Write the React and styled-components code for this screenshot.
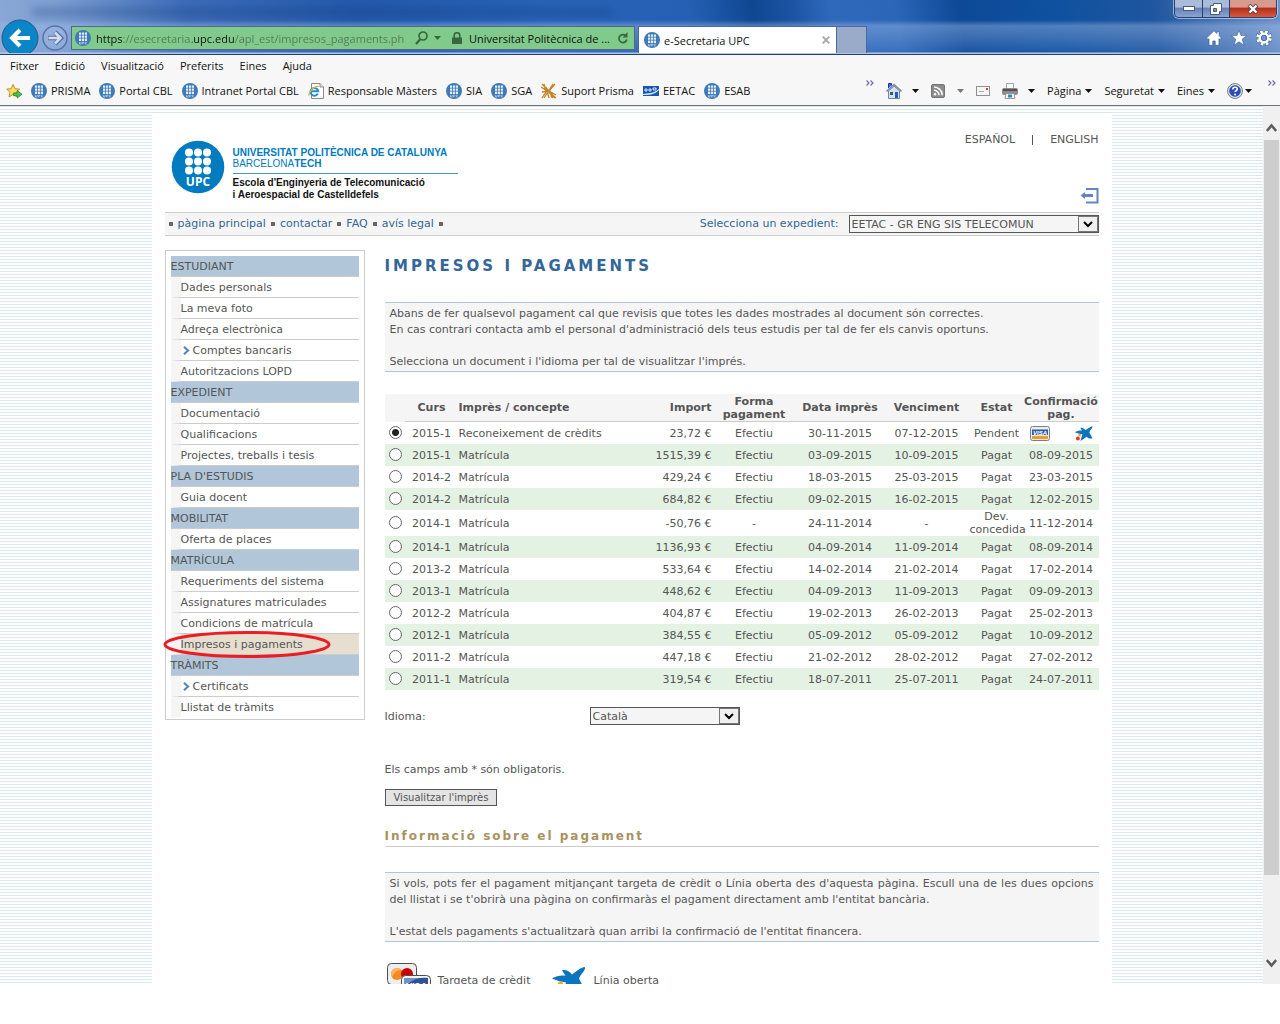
import React, { useState } from "react";
import styled, { createGlobalStyle } from "styled-components";

const favorites = [
  { icon: "upc", label: "PRISMA" },
  { icon: "upc", label: "Portal CBL" },
  { icon: "upc", label: "Intranet Portal CBL" },
  { icon: "ie", label: "Responsable Màsters" },
  { icon: "upc", label: "SIA" },
  { icon: "upc", label: "SGA" },
  { icon: "prisma", label: "Suport Prisma" },
  { icon: "eetac", label: "EETAC" },
  { icon: "upc", label: "ESAB" },
];

const menu = [
  {
    title: "ESTUDIANT",
    items: [
      { label: "Dades personals" },
      { label: "La meva foto" },
      { label: "Adreça electrònica" },
      { label: "Comptes bancaris", arrow: true },
      { label: "Autoritzacions LOPD" },
    ],
  },
  {
    title: "EXPEDIENT",
    items: [
      { label: "Documentació" },
      { label: "Qualificacions" },
      { label: "Projectes, treballs i tesis" },
    ],
  },
  { title: "PLA D'ESTUDIS", items: [{ label: "Guia docent" }] },
  { title: "MOBILITAT", items: [{ label: "Oferta de places" }] },
  {
    title: "MATRÍCULA",
    items: [
      { label: "Requeriments del sistema" },
      { label: "Assignatures matriculades" },
      { label: "Condicions de matrícula" },
      { label: "Impresos i pagaments", active: true },
    ],
  },
  {
    title: "TRÀMITS",
    items: [
      { label: "Certificats", arrow: true },
      { label: "Llistat de tràmits" },
    ],
  },
];

const payments = [
  ["2015-1", "Reconeixement de crèdits", "23,72 €", "Efectiu", "30-11-2015", "07-12-2015", "Pendent", null],
  ["2015-1", "Matrícula", "1515,39 €", "Efectiu", "03-09-2015", "10-09-2015", "Pagat", "08-09-2015"],
  ["2014-2", "Matrícula", "429,24 €", "Efectiu", "18-03-2015", "25-03-2015", "Pagat", "23-03-2015"],
  ["2014-2", "Matrícula", "684,82 €", "Efectiu", "09-02-2015", "16-02-2015", "Pagat", "12-02-2015"],
  ["2014-1", "Matrícula", "-50,76 €", "-", "24-11-2014", "-", "Dev. concedida", "11-12-2014"],
  ["2014-1", "Matrícula", "1136,93 €", "Efectiu", "04-09-2014", "11-09-2014", "Pagat", "08-09-2014"],
  ["2013-2", "Matrícula", "533,64 €", "Efectiu", "14-02-2014", "21-02-2014", "Pagat", "17-02-2014"],
  ["2013-1", "Matrícula", "448,62 €", "Efectiu", "04-09-2013", "11-09-2013", "Pagat", "09-09-2013"],
  ["2012-2", "Matrícula", "404,87 €", "Efectiu", "19-02-2013", "26-02-2013", "Pagat", "25-02-2013"],
  ["2012-1", "Matrícula", "384,55 €", "Efectiu", "05-09-2012", "05-09-2012", "Pagat", "10-09-2012"],
  ["2011-2", "Matrícula", "447,18 €", "Efectiu", "21-02-2012", "28-02-2012", "Pagat", "27-02-2012"],
  ["2011-1", "Matrícula", "319,54 €", "Efectiu", "18-07-2011", "25-07-2011", "Pagat", "24-07-2011"],
];

/* icons */

const UpcIcon = () => (
  <svg width="16" height="16" viewBox="0 0 16 16" aria-hidden="true">
    <circle cx="8" cy="8" r="8" fill="#3f7ab8" />
    <path d="M4 2.5h8v8.5H4z" fill="#e3edf6" />
    <path d="M6.500 2v9.500M9.500 2v9.500M4 5.200h8M4 8.200h8" stroke="#3f7ab8" strokeWidth="0.8" />
    <path d="M4.500 12v2h1.500v-2M7.300 14.200v-2h1.500v1h-1.500M11.800 12.200h-1.500v1.800h1.500" stroke="#c5d9ea" strokeWidth="0.7" fill="none" />
  </svg>
);

const IeIcon = () => (
  <svg width="16" height="16" viewBox="0 0 16 16" aria-hidden="true">
    <path d="M3.500 0.500h8.500l3.500 3.500v11.500h-12z" fill="#fff" stroke="#8b8b8b" />
    <path d="M12 0.500v3.500h3.500" fill="#e8e8e8" stroke="#8b8b8b" />
    <path d="M9.800 10.600A3.900 3.900 0 1 1 10.200 8.300H3" fill="none" stroke="#1e8fe0" strokeWidth="2" />
    <path d="M1 12.500C0 9 7 2.500 10.800 3.300" fill="none" stroke="#f0b323" strokeWidth="1.200" />
  </svg>
);

const PrismaIcon = () => (
  <svg width="16" height="16" viewBox="0 0 16 16" aria-hidden="true">
    <path d="M1 1l6 6 7 8M0 4l8 5 4 6M3 1l2 8-4 6M14 1L8 8l7 4M5 4l3 11M1 9l6-1 8 7M12 1l-9 14M9 9l2 6" stroke="#c08529" strokeWidth="1.300" fill="none" />
  </svg>
);

const EetacIcon = () => (
  <svg width="16" height="16" viewBox="0 0 16 16" aria-hidden="true">
    <rect y="3" width="16" height="10" fill="#1457b8" />
    <path d="M0 11c5-1 10 0 16-5v1C11 12 6 12 0 12z" fill="#fff" opacity="0.850" />
    <path d="M2 6h2v2H2zM6 6h2v2H6zM10 5h3v2h-3z" fill="none" stroke="#fff" strokeWidth="0.800" />
  </svg>
);

const AddFavoriteIcon = () => (
  <svg width="16" height="16" viewBox="0 0 17 16" aria-hidden="true">
    <path d="M7.500 1l2 4.500 5 .5-3.700 3.300 1 5-4.300-2.600-4.300 2.600 1-5L.8 6l4.700-.5z" fill="#fbdc62" stroke="#c58a17" />
    <path d="M8 10h4V7.500l5 4-5 4V13H8z" fill="#4fc04a" stroke="#1f8a2c" strokeWidth="0.800" />
  </svg>
);

const favoriteIcons = { upc: UpcIcon, ie: IeIcon, prisma: PrismaIcon, eetac: EetacIcon };

const Caret = ({ color = "#111" }) => (
  <svg width="7" height="4" viewBox="0 0 7 4" aria-hidden="true">
    <path d="M0 0h7L3.500 4z" fill={color} />
  </svg>
);

const Chevrons = () => (
  <svg width="8" height="6" viewBox="0 0 8 6" aria-hidden="true">
    <path d="M.5.500L3 3 .5 5.500M4.500.500L7 3 4.500 5.500" fill="none" stroke="#6a6ab0" strokeWidth="1.200" />
  </svg>
);

const HouseIcon = () => (
  <svg width="16" height="16" viewBox="0 0 16 16" aria-hidden="true">
    <path d="M2.500 8v7.500h11V8L8 3z" fill="#d5e0ef" stroke="#72869f" />
    <path d="M2.500 5V.5h3v2" fill="#3b5be0" stroke="#2638b0" />
    <path d="M.5 8.500L8 1.500l7.500 7" fill="none" stroke="#788caa" strokeWidth="1.600" />
    <path d="M9 9h3v6H9z" fill="#235fb5" />
    <path d="M4 9h3v3H4z" fill="#4a5564" />
  </svg>
);

const RssIcon = () => (
  <svg width="14" height="14" viewBox="0 0 14 14" aria-hidden="true">
    <rect x="0.500" y="0.500" width="13" height="13" rx="1.500" fill="#8b8b8b" stroke="#747474" />
    <circle cx="4" cy="10.200" r="1.300" fill="#fff" />
    <path d="M3 6.200a5 5 0 0 1 5 5M3 3a8.200 8.200 0 0 1 8.200 8.200" fill="none" stroke="#fff" strokeWidth="1.500" />
  </svg>
);

const MailIcon = () => (
  <svg width="14" height="10" viewBox="0 0 14 10" aria-hidden="true">
    <rect x="0.500" y="0.500" width="13" height="9" fill="#f7f7f7" stroke="#909090" />
    <path d="M10 2h2v2h-2z" fill="#e23a2e" />
    <path d="M3 5.500h5" stroke="#aaa" />
  </svg>
);

const PrinterIcon = () => (
  <svg width="16" height="16" viewBox="0 0 16 16" aria-hidden="true">
    <path d="M4.500 6V.5h7V6" fill="#fff" stroke="#a3a3a3" />
    <rect y="5" width="16" height="7" rx="2" fill="#8a8c8f" />
    <path d="M1 7h14" stroke="#515356" strokeWidth="2" />
    <path d="M4 10.500h8l1 5H3z" fill="#f3f6f8" stroke="#9a9a9a" />
    <path d="M6 11.500h4v3H6z" fill="#2f8fb0" />
  </svg>
);

const HelpIcon = () => (
  <svg width="16" height="16" viewBox="0 0 16 16" aria-hidden="true">
    <circle cx="8" cy="8" r="7.500" fill="#d7dbe3" stroke="#7d8796" />
    <circle cx="8" cy="8" r="5.800" fill="#2b4fb0" />
    <path d="M5.800 6.400c0-3 4.500-2.800 4.500-.3 0 1.500-2.200 1.500-2.200 3" fill="none" stroke="#fff" strokeWidth="1.600" />
    <circle cx="8.100" cy="11.500" r="1" fill="#fff" />
  </svg>
);

const BackIcon = () => (
  <svg width="38" height="36" viewBox="0 0 38 36" aria-hidden="true">
    <circle cx="19" cy="19" r="18" fill="#0a85c7" stroke="#29577f" />
    <path d="M29 19H12M19 11l-8 8 8 8" fill="none" stroke="#fff" strokeWidth="4" />
  </svg>
);

const ForwardIcon = () => (
  <svg width="26" height="26" viewBox="0 0 26 26" aria-hidden="true">
    <circle cx="13" cy="13" r="12" fill="#a9bce0" fillOpacity="0.350" stroke="#5573a8" strokeWidth="1.500" />
    <path d="M6 13h12M13 7l6 6-6 6" fill="none" stroke="#5370a5" strokeWidth="4.500" />
    <path d="M6.500 13h11M13 7.500l5.500 5.500-5.500 5.500" fill="none" stroke="#d4def0" strokeWidth="2.500" />
  </svg>
);

const SearchIcon = () => (
  <svg width="13" height="14" viewBox="0 0 13 14" aria-hidden="true">
    <circle cx="8" cy="5" r="4" fill="none" stroke="#38663f" strokeWidth="1.700" />
    <path d="M5 8.500L1 13" stroke="#38663f" strokeWidth="2.200" />
  </svg>
);

const LockIcon = () => (
  <svg width="10" height="12" viewBox="0 0 10 12" aria-hidden="true">
    <path d="M2.200 6V3.500a2.800 2.800 0 0 1 5.600 0V6" fill="none" stroke="#38663f" strokeWidth="1.600" />
    <path d="M0 5.500h10V12H0z" fill="#38663f" />
  </svg>
);

const ReloadIcon = () => (
  <svg width="12" height="13" viewBox="0 0 12 13" aria-hidden="true">
    <path d="M8.500 3.500A4 4 0 1 0 9.800 7.500" fill="none" stroke="#38663f" strokeWidth="1.700" />
    <path d="M10.500 0v5.500H5.500z" fill="#38663f" />
  </svg>
);

const CloseIcon = () => (
  <svg width="8" height="8" viewBox="0 0 8 8" aria-hidden="true">
    <path d="M.7.700l6.600 6.600M7.300.700L.7 7.300" stroke="#a6a6a6" strokeWidth="1.900" />
  </svg>
);

const HomeToolIcon = () => (
  <svg width="16" height="16" viewBox="0 0 16 16" aria-hidden="true">
    <path d="M8 .7L.6 8l1.500 1.500.9-.8v6.600h3.800v-4.300h2.400v4.300H13V8.700l.9.800L15.400 8l-2.200-2.200V1.700h-2.400v1.800z" fill="#fff" stroke="#3d5c92" strokeWidth="0.700" />
  </svg>
);

const StarToolIcon = () => (
  <svg width="16" height="16" viewBox="0 0 16 16" aria-hidden="true">
    <path d="M8 .3l2 5.300h5.700l-4.500 3.600 1.800 6.100L8 11.800l-5 3.500 1.800-6.100L.3 5.600H6z" fill="#fff" stroke="#3d5c92" strokeWidth="0.600" />
  </svg>
);

const GearToolIcon = () => (
  <svg width="16" height="16" viewBox="0 0 16 16" aria-hidden="true">
    <circle cx="8" cy="8" r="6.300" fill="none" stroke="#3d5c92" strokeWidth="4" strokeDasharray="3.300 1.650" />
    <circle cx="8" cy="8" r="6.300" fill="none" stroke="#fff" strokeWidth="3" strokeDasharray="2.500 2.450" strokeDashoffset="-0.400" />
    <circle cx="8" cy="8" r="4.200" fill="none" stroke="#fff" strokeWidth="2.500" />
    <circle cx="8" cy="8" r="2.700" fill="none" stroke="#3d5c92" strokeWidth="0.800" />
  </svg>
);

const ExitIcon = () => (
  <svg width="19" height="16" viewBox="0 0 19 16" aria-hidden="true">
    <path d="M6 1h11.500v13.500H6" fill="none" stroke="#6484bf" strokeWidth="2" />
    <path d="M3 7.500h10" stroke="#6484bf" strokeWidth="3" />
    <path d="M5 4v7L.5 7.500z" fill="#6484bf" />
  </svg>
);

const MenuArrow = () => (
  <svg width="7" height="9" viewBox="0 0 7 9" aria-hidden="true">
    <path d="M1 .8l4 3.700-4 3.700" fill="none" stroke="#5f80c4" strokeWidth="2.200" />
  </svg>
);

const SelectArrow = () => (
  <svg width="10" height="7" viewBox="0 0 10 7" aria-hidden="true">
    <path d="M1 1l4 4 4-4" fill="none" stroke="#000" strokeWidth="2" />
  </svg>
);

const LogoMark = () => (
  <svg width="54" height="54" viewBox="0 0 54 54" role="img" aria-label="UPC">
    <circle cx="27" cy="27" r="26.300" fill="#007bc0" />
    {[12.5, 21.5, 30.5].map((cy) =>
      [18, 27, 36].map((cx) => <circle key={`${cx}-${cy}`} cx={cx} cy={cy} r="4" fill="#fff" />)
    )}
    <text x="27" y="46" textAnchor="middle" fill="#fff" fontFamily="Open Sans, sans-serif" fontWeight="700" fontSize="12">
      UPC
    </text>
  </svg>
);

const CaixaStar = ({ width, height }) => (
  <svg width={width} height={height} viewBox="0 0 34 28" aria-hidden="true">
    <path
      d="M0 11.500C4 9 9 8 13.500 8.700 12.500 7 11 5 10 3.300 14 2.500 17.500 4.500 20 7.500 24 4.500 28 1.500 32 .1 34 0 33 2 31.500 4.500 29.500 7 28 9 27 11.500 28.500 15 31.500 19 33 23.500 28 24 24.500 22.500 21.500 20 18 23 14 26 10.500 28 11.500 23 13 19 14 15.500 9 14.500 4 13.500 0 11.500z"
      fill="#0a74bd"
    />
    <circle cx="8.500" cy="17" r="2.600" fill="#f7a51c" />
    <circle cx="5.500" cy="23.500" r="3.600" fill="#e4322b" />
  </svg>
);

const VisaIcon = () => (
  <svg width="20" height="15" viewBox="0 0 20 15" role="img" aria-label="VISA">
    <rect x="0.500" y="0.500" width="19" height="14" rx="2" fill="#e6edf4" stroke="#7b7f84" />
    <path d="M2 3.500h16V9H2z" fill="#2d5f9d" />
    <path d="M2 10h16v3H2z" fill="#f39b1d" />
    <text x="10" y="8.500" textAnchor="middle" fill="#fff" fontFamily="Liberation Sans, sans-serif" fontStyle="italic" fontWeight="700" fontSize="6">
      VISA
    </text>
  </svg>
);

const CardsIcon = () => (
  <svg width="44" height="36" viewBox="0 0 44 36" role="img" aria-label="VISA">
    <rect x="0.500" y="0.500" width="29" height="21" rx="4" fill="#eee" stroke="#4c4c4c" />
    <circle cx="10" cy="11" r="6" fill="#f58a1f" />
    <circle cx="20" cy="11" r="6" fill="#cc0000" />
    <path d="M4 11a6 6 0 0 1 6-6c2 0 3 1 4 2-4 0-7 3-9 7z" fill="#fbb468" />
    <rect x="14.500" y="12.500" width="29" height="21" rx="4" fill="#f4f6f8" stroke="#4c4c4c" />
    <path d="M17 15h24v12H17z" fill="#6f93c4" />
    <path d="M22 20c6-5 12-6 19-5v12H17z" fill="#2b5595" />
    <text x="29" y="25.500" textAnchor="middle" fill="#fff" fontFamily="Liberation Sans, sans-serif" fontStyle="italic" fontWeight="700" fontSize="9">
      VISA
    </text>
  </svg>
);

const ScrollArrow = ({ down }) => (
  <svg width="11" height="9" viewBox="0 0 11 9" aria-hidden="true">
    <path d={down ? "M.8 1l4.700 5.500L10.200 1" : "M.8 8l4.700-5.500L10.200 8"} fill="none" stroke="#5d5d5d" strokeWidth="2.600" />
  </svg>
);

const Dropdown = ({ id, wide, options }) => (
  <SelectBox $wide={wide}>
    <Select id={id}>
      {options.map((option) => (
        <option key={option}>{option}</option>
      ))}
    </Select>
    <SelectButton>
      <SelectArrow />
    </SelectButton>
  </SelectBox>
);

export default function App() {
  const [selected, setSelected] = useState(0);

  return (
    <>
      <GlobalStyle />
      <BrowserWindow>
        <Frame>
          <TitleBar>
            <BlurredTitle />
            <WindowButtons>
              <WindowButton aria-label="Minimitza">
                <svg width="12" height="5" viewBox="0 0 12 5">
                  <rect x="0.500" y="0.500" width="11" height="4" fill="#fff" stroke="#4b5a75" />
                </svg>
              </WindowButton>
              <WindowButton aria-label="Restaura">
                <svg width="12" height="12" viewBox="0 0 12 12">
                  <path d="M3.500.500h8v8h-2v3h-9v-9h3z" fill="#fff" stroke="#4b5a75" />
                  <path d="M3.500 5.500h3v3h-3z" fill="#7d92ba" stroke="#4b5a75" />
                </svg>
              </WindowButton>
              <WindowButton $close aria-label="Tanca">
                <svg width="12" height="10" viewBox="0 0 12 10">
                  <path d="M2 1l8 8M10 1L2 9" stroke="#59414a" strokeWidth="4" />
                  <path d="M2.500 1.500l7 7M9.500 1.500l-7 7" stroke="#fff" strokeWidth="2.400" />
                </svg>
              </WindowButton>
            </WindowButtons>
          </TitleBar>
          <NavigationBar>
            <BackButton aria-label="Enrere">
              <BackIcon />
            </BackButton>
            <ForwardButton aria-label="Endavant">
              <ForwardIcon />
            </ForwardButton>
            <AddressBar>
              <UpcIcon />
              <AddressInput
                aria-label="Adreça"
                defaultValue="https://esecretaria.upc.edu/apl_est/impresos_pagaments.ph"
              />
              <SearchIcon />
              <Caret color="#38663f" />
              <Certificate>
                <LockIcon />
                <span>Universitat Politècnica de ...</span>
                <ReloadIcon />
              </Certificate>
            </AddressBar>
            <Tab>
              <UpcIcon />
              <TabTitle>e-Secretaria UPC</TabTitle>
              <PlainButton aria-label="Tanca la pestanya">
                <CloseIcon />
              </PlainButton>
            </Tab>
            <NewTab aria-label="Pestanya nova" />
            <ToolIcons>
              <PlainButton aria-label="Inici">
                <HomeToolIcon />
              </PlainButton>
              <PlainButton aria-label="Preferits">
                <StarToolIcon />
              </PlainButton>
              <PlainButton aria-label="Configuració">
                <GearToolIcon />
              </PlainButton>
            </ToolIcons>
          </NavigationBar>
        </Frame>

        <MenuBar>
          {["Fitxer", "Edició", "Visualització", "Preferits", "Eines", "Ajuda"].map((label) => (
            <PlainButton key={label}>{label}</PlainButton>
          ))}
        </MenuBar>

        <FavoritesBar>
          <Favorites>
            <PlainButton aria-label="Afegeix a preferits">
              <AddFavoriteIcon />
            </PlainButton>
            {favorites.map(({ icon, label }) => {
              const Icon = favoriteIcons[icon];
              return (
                <FavoriteLink href="#" key={label}>
                  <Icon />
                  {label}
                </FavoriteLink>
              );
            })}
          </Favorites>
          <Commands>
            <MoreButton aria-label="Més preferits">
              <Chevrons />
            </MoreButton>
            <Command $gap={10} aria-label="Pàgina d'inici">
              <HouseIcon />
              <Caret />
            </Command>
            <Command $gap={12} aria-label="Canals">
              <RssIcon />
              <Caret color="#777" />
            </Command>
            <Command aria-label="Correu">
              <MailIcon />
            </Command>
            <Command $gap={10} aria-label="Imprimeix">
              <PrinterIcon />
              <Caret />
            </Command>
            <Command>
              Pàgina
              <Caret />
            </Command>
            <Command>
              Seguretat
              <Caret />
            </Command>
            <Command>
              Eines
              <Caret />
            </Command>
            <Command $gap={2} aria-label="Ajuda">
              <HelpIcon />
              <Caret />
            </Command>
            <MoreButton $last aria-label="Més ordres">
              <Chevrons />
            </MoreButton>
          </Commands>
        </FavoritesBar>

        <Viewport>
          <Backdrop>
            <Page>
              <Header>
                <Logo>
                  <LogoMark />
                  <LogoText>
                    <LogoName>UNIVERSITAT POLITÈCNICA DE CATALUNYA</LogoName>
                    <LogoBrand>
                      BARCELONA<b>TECH</b>
                    </LogoBrand>
                    <LogoSchool>
                      Escola d'Enginyeria de Telecomunicació
                      <br />i Aeroespacial de Castelldefels
                    </LogoSchool>
                  </LogoText>
                </Logo>
                <HeaderSide>
                  <Languages>
                    <TextLink href="#">ESPAÑOL</TextLink>
                    <LanguageDivider />
                    <TextLink href="#">ENGLISH</TextLink>
                  </Languages>
                  <ExitLink href="#" aria-label="Surt">
                    <ExitIcon />
                  </ExitLink>
                </HeaderSide>
              </Header>

              <LinksBar>
                <Links>
                  {["pàgina principal", "contactar", "FAQ", "avís legal"].map((label) => (
                    <li key={label}>
                      <BlueLink href="#">{label}</BlueLink>
                    </li>
                  ))}
                </Links>
                <RecordPicker>
                  <label htmlFor="expedient">Selecciona un expedient:</label>
                  <Dropdown id="expedient" wide options={["EETAC - GR ENG SIS TELECOMUN"]} />
                </RecordPicker>
              </LinksBar>

              <Columns>
                <Sidebar>
                  {menu.map((section) => (
                    <React.Fragment key={section.title}>
                      <SectionTitle>{section.title}</SectionTitle>
                      {section.items.map((item) => (
                        <MenuItem key={item.label} $active={item.active}>
                          <MenuLink href="#">
                            {item.arrow && <MenuArrow />}
                            {item.label}
                          </MenuLink>
                          {item.active && (
                            <Marker width="168" height="27" viewBox="0 0 168 27" aria-hidden="true">
                              <ellipse cx="84" cy="13.500" rx="82" ry="12" fill="none" stroke="#ed1c24" strokeWidth="3" />
                            </Marker>
                          )}
                        </MenuItem>
                      ))}
                    </React.Fragment>
                  ))}
                </Sidebar>

                <Main>
                  <Title>IMPRESOS I PAGAMENTS</Title>
                  <InfoBox>
                    Abans de fer qualsevol pagament cal que revisis que totes les dades mostrades al document són correctes.
                    <br />
                    En cas contrari contacta amb el personal d'administració dels teus estudis per tal de fer els canvis oportuns.
                    <br />
                    <br />
                    Selecciona un document i l'idioma per tal de visualitzar l'imprés.
                  </InfoBox>

                  <Table>
                    <colgroup>
                      <Col $width={20} />
                      <Col $width={54} />
                      <Col />
                      <Col $width={100} />
                      <Col $width={85} />
                      <Col $width={87} />
                      <Col $width={86} />
                      <Col $width={54} />
                      <Col $width={75} />
                    </colgroup>
                    <thead>
                      <tr>
                        <Th $blank />
                        <Th>Curs</Th>
                        <Th $align="left">Imprès / concepte</Th>
                        <Th $align="right">Import</Th>
                        <Th>
                          Forma
                          <br />
                          pagament
                        </Th>
                        <Th>Data imprès</Th>
                        <Th>Venciment</Th>
                        <Th>Estat</Th>
                        <Th>
                          Confirmació
                          <br />
                          pag.
                        </Th>
                      </tr>
                    </thead>
                    <tbody>
                      {payments.map(([curs, concept, amount, method, issued, due, status, confirmed], index) => (
                        <Row key={index}>
                          <Td>
                            <Radio
                              name="impres"
                              aria-label={`${concept} ${curs}`}
                              checked={selected === index}
                              onChange={() => setSelected(index)}
                            />
                          </Td>
                          <Td>{curs}</Td>
                          <Td $align="left">{concept}</Td>
                          <Td $align="right">{amount}</Td>
                          <Td>{method}</Td>
                          <Td>{issued}</Td>
                          <Td>{due}</Td>
                          <Td>{status}</Td>
                          <Td>
                            {confirmed || (
                              <PayLinks>
                                <a href="#" aria-label="Targeta de crèdit">
                                  <VisaIcon />
                                </a>
                                <a href="#" aria-label="Línia oberta">
                                  <CaixaStar width={18} height={15} />
                                </a>
                              </PayLinks>
                            )}
                          </Td>
                        </Row>
                      ))}
                    </tbody>
                  </Table>

                  <LanguageRow>
                    <label htmlFor="idioma">Idioma:</label>
                    <Dropdown id="idioma" options={["Català", "Castellà", "Anglès"]} />
                  </LanguageRow>
                  <Note>Els camps amb * són obligatoris.</Note>
                  <SubmitButton type="button">Visualitzar l'imprès</SubmitButton>

                  <Subtitle>Informació sobre el pagament</Subtitle>
                  <InfoBox $justify>
                    Si vols, pots fer el pagament mitjançant targeta de crèdit o Línia oberta des d'aquesta pàgina. Escull una de les dues opcions del llistat i se t'obrirà una pàgina on confirmaràs el pagament directament amb l'entitat bancària.
                    <br />
                    <br />
                    L'estat dels pagaments s'actualitzarà quan arribi la confirmació de l'entitat financera.
                  </InfoBox>
                  <Legend>
                    <LegendItem>
                      <CardsIcon />
                      Targeta de crèdit
                    </LegendItem>
                    <LegendItem>
                      <CaixaStar width={34} height={28} />
                      Línia oberta
                    </LegendItem>
                  </Legend>
                </Main>
              </Columns>
            </Page>
          </Backdrop>
          <Scrollbar>
            <ScrollUp>
              <ScrollArrow />
            </ScrollUp>
            <Thumb />
            <ScrollDown>
              <ScrollArrow down />
            </ScrollDown>
          </Scrollbar>
        </Viewport>
      </BrowserWindow>
    </>
  );
}

const GlobalStyle = createGlobalStyle`
  * {
    box-sizing: border-box;
  }

  body {
    margin: 0;
    background: #fff;
    font-family: "Open Sans", sans-serif;
    font-size: 11px;
    color: #111;
    overflow: hidden;
  }

  svg {
    display: block;
    flex-shrink: 0;
  }

  button {
    font: inherit;
    color: inherit;
    cursor: pointer;
  }
`;

/* browser */

const BrowserWindow = styled.div`
  display: flex;
  flex-direction: column;
  height: calc(100vh - 40px);
  min-height: 600px;
`;

const Frame = styled.div`
  flex-shrink: 0;
  border-bottom: 1px solid #203c70;
  background:
    linear-gradient(
      180deg,
      rgba(255, 255, 255, 0) 20px,
      rgba(160, 185, 230, 0.45) 26px,
      rgba(160, 185, 230, 0.3) 38px,
      rgba(160, 185, 230, 0.1) 52px,
      #b4c7e4 53px
    ),
    linear-gradient(
      80deg,
      #8ba8d6 0%,
      #7e9fd2 5%,
      #3d6cb8 15%,
      #2459ab 28%,
      #2863b7 44%,
      #2560b4 54%,
      #0f4791 59%,
      #1c54a3 62%,
      #2f69bb 65%,
      #2b66b8 70%,
      #0d4997 75%,
      #0e519f 82%,
      #1f569f 90%,
      #6e93c9 100%
    );
`;

const TitleBar = styled.div`
  display: flex;
  justify-content: space-between;
  height: 26px;
  padding-right: 3px;
`;

const BlurredTitle = styled.div`
  width: 580px;
  height: 8px;
  margin: 8px 0 0 32px;
  background: #0d3672;
  opacity: 0.3;
  filter: blur(4px);
`;

const WindowButtons = styled.div`
  display: flex;
  height: 18px;
  border: 1px solid #2c4168;
  border-top: 0;
  border-radius: 0 0 5px 5px;
  box-shadow: 0 0 0 1px rgba(220, 230, 248, 0.6);
  overflow: hidden;
`;

const WindowButton = styled.button`
  display: flex;
  align-items: center;
  justify-content: center;
  width: ${({ $close }) => ($close ? "47px" : "27px")};
  padding: 0;
  border: 0;
  border-left: 1px solid #2c4168;
  background: ${({ $close }) =>
    $close
      ? "linear-gradient(#d79a8e 0 40%, #b5301b 50%, #d8593f)"
      : "linear-gradient(#a9bcdc 0 40%, #6783b5 50%, #8aa5d4)"};

  &:first-child {
    border-left: 0;
  }
`;

const NavigationBar = styled.div`
  display: flex;
  height: 28px;
`;

const PlainButton = styled.button`
  padding: 0;
  border: 0;
  background: none;
`;

const BackButton = styled(PlainButton)`
  display: flex;
  height: 34px;
  margin: -7px 0 0 1px;
  overflow: hidden;
`;

const ForwardButton = styled(PlainButton)`
  height: 26px;
  margin: -1px 3px 0 3px;
`;

const AddressBar = styled.div`
  display: flex;
  align-items: center;
  width: 564px;
  height: 24px;
  padding: 0 5px 0 3px;
  border: 1px solid #4a6a86;
  background: #80ca8b;
`;

/* scheme and path are dimmed, only the domain stays black */
const AddressInput = styled.input`
  flex: 1;
  min-width: 0;
  margin: 0 5px;
  padding: 0;
  border: 0;
  outline: 0;
  font: inherit;
  color: transparent;
  background: linear-gradient(
    90deg,
    #111 0 27px,
    #56775b 27px 96px,
    #111 96px 138px,
    #56775b 138px
  );
  background-clip: text;
  -webkit-background-clip: text;

  & + svg + svg {
    margin: 0 11px 0 6px;
  }
`;

const Certificate = styled.div`
  display: flex;
  align-items: center;
  justify-content: space-between;
  width: 177px;
  white-space: nowrap;
`;

const Tab = styled.div`
  display: flex;
  align-items: center;
  gap: 4px;
  width: 199px;
  height: 27px;
  margin-left: 3px;
  padding: 0 6px 0 5px;
  border: 1px solid #4a6a9c;
  border-bottom: 0;
  background: #fff;
`;

const TabTitle = styled.span`
  flex: 1;
`;

const NewTab = styled.button`
  width: 30px;
  height: 27px;
  border: 1px solid #4a6a9c;
  border-width: 1px 1px 0 0;
  background: #9aabc9;
`;

const ToolIcons = styled.div`
  display: flex;
  align-items: center;
  gap: 9px;
  height: 24px;
  margin-left: auto;
  padding-right: 8px;
`;

const MenuBar = styled.div`
  display: flex;
  align-items: center;
  gap: 16px;
  height: 22px;
  flex-shrink: 0;
  padding: 0 10px 2px;
  background: #f7f7f7;
`;

const FavoritesBar = styled.div`
  display: flex;
  justify-content: space-between;
  height: 29px;
  flex-shrink: 0;
  padding: 0 4px 1px 6px;
  border-bottom: 1px solid #6d737b;
  background: #f7f7f7;
`;

const Favorites = styled.div`
  display: flex;
  align-items: center;
  gap: 9px;
`;

const FavoriteLink = styled.a`
  display: flex;
  align-items: center;
  gap: 4px;
  color: inherit;
  text-decoration: none;
  white-space: nowrap;
`;

const Commands = styled.div`
  display: flex;
  align-items: center;
  gap: 12px;
`;

const Command = styled(PlainButton)`
  display: flex;
  align-items: center;
  gap: ${({ $gap = 4 }) => $gap}px;
`;

const MoreButton = styled(PlainButton)`
  align-self: flex-start;
  padding-top: 3px;
  margin-left: ${({ $last }) => ($last ? "4px" : "0")};
`;

const Viewport = styled.div`
  display: flex;
  flex: 1;
  min-height: 0;
`;

const Scrollbar = styled.div`
  display: flex;
  flex-direction: column;
  width: 17px;
  padding: 0 1px;
  background: #f0f0f0;
`;

const ScrollUp = styled.div`
  display: flex;
  align-items: center;
  justify-content: center;
  height: 34px;
  padding-top: 8px;
`;

const Thumb = styled.div`
  flex: 1;
  background: #cdcdcd;
`;

const ScrollDown = styled.div`
  display: flex;
  align-items: flex-end;
  justify-content: center;
  height: 109px;
  padding-bottom: 16px;
`;

/* page */

const Backdrop = styled.div`
  flex: 1;
  min-width: 0;
  padding-top: 8px;
  overflow: hidden;
  background: repeating-linear-gradient(#dce8ee 0 1px, #fff 1px 3px);
`;

const Page = styled.div`
  max-width: 960px;
  min-height: 100%;
  margin: 0 auto;
  padding: 0 13px;
  background: #fff;
  font-family: Verdana, "DejaVu Sans", sans-serif;
  font-size: 11px;
  line-height: 16px;
  color: #555;
`;

const Header = styled.div`
  display: flex;
  justify-content: space-between;
  height: 98px;
`;

const Logo = styled.div`
  display: flex;
  gap: 8px;
  padding: 26px 0 0 6px;
`;

const LogoText = styled.div`
  min-width: 225px;
  padding-top: 7px;
  font-family: "Liberation Sans", Arial, sans-serif;
  font-size: 10px;
  line-height: 12px;
`;

const LogoName = styled.div`
  font-weight: 700;
  color: #007bc0;
`;

const LogoBrand = styled.div`
  height: 15px;
  line-height: 10px;
  border-bottom: 1px solid #3f9ad2;
  color: #007bc0;
`;

const LogoSchool = styled.div`
  padding-top: 3px;
  font-weight: 700;
  color: #111;
`;

const HeaderSide = styled.div`
  display: flex;
  flex-direction: column;
  justify-content: space-between;
  align-items: flex-end;
  padding: 18px 0 8px;
`;

const Languages = styled.div`
  display: flex;
  align-items: center;
  gap: 17px;
`;

const TextLink = styled.a`
  color: inherit;
  text-decoration: none;
`;

const LanguageDivider = styled.span`
  width: 1px;
  height: 10px;
  background: #555;
`;

const ExitLink = styled.a`
  display: block;
`;

const LinksBar = styled.div`
  display: flex;
  align-items: center;
  justify-content: space-between;
  height: 24px;
  border: 1px solid #ccc;
  border-width: 1px 0;
  background: #f5f5f5;
  color: #336699;
`;

const Links = styled.ul`
  display: flex;
  margin: 0;
  padding: 0 0 0 2px;
  list-style: none;

  li {
    display: flex;
    align-items: center;
  }

  li::before,
  li:last-child::after {
    content: "";
    width: 4px;
    height: 4px;
    margin: 0 5px 0 2px;
    background: #666;
  }

  li + li::before,
  li:last-child::after {
    margin-left: 5px;
  }
`;

const BlueLink = styled(TextLink)`
  color: #336699;
`;

const RecordPicker = styled.div`
  display: flex;
  align-items: center;
  gap: 10px;
`;

const SelectBox = styled.div`
  display: grid;
  grid-template-columns: 1fr 20px;
  width: ${({ $wide }) => ($wide ? "250px" : "150px")};
  height: 18px;
  border: 1px solid #555;
  background: #f5f5f5;
`;

const Select = styled.select`
  grid-area: 1 / 1 / 2 / 3;
  appearance: none;
  padding: 1px 20px 0 2px;
  border: 0;
  outline: 0;
  background: none;
  font: inherit;
  line-height: 15px;
  color: #555;
`;

const SelectButton = styled.span`
  grid-area: 1 / 2;
  display: flex;
  align-items: center;
  justify-content: center;
  border: 1px solid #777;
  background: #f0f0f0;
  pointer-events: none;
`;

const Columns = styled.div`
  display: flex;
  align-items: flex-start;
  gap: 20px;
  padding-top: 14px;
`;

const Sidebar = styled.nav`
  flex: 0 0 200px;
  padding: 5px 5px 1px;
  border: 1px solid #ccc;
`;

const SectionTitle = styled.div`
  height: 21px;
  line-height: 21px;
  border-bottom: 1px solid #ccc;
  background: #b1c6d8;
`;

const MenuItem = styled.div`
  position: relative;
  height: 21px;
  line-height: 21px;
  border-bottom: 1px solid #ccc;
  border-left: 10px solid #f5f5f5;
  background: ${({ $active }) => ($active ? "#e6dfcf" : "#fff")};

  &:last-child {
    border-bottom-color: #fff;
  }
`;

const MenuLink = styled(TextLink)`
  display: flex;
  align-items: center;
  gap: 3px;

  svg {
    margin-left: 2px;
  }
`;

const Marker = styled.svg`
  position: absolute;
  left: -18px;
  top: -3px;
`;

const Main = styled.main`
  flex: 1;
  min-width: 0;
`;

const Title = styled.h1`
  margin: 6px 0 26px;
  font-size: 15px;
  line-height: 20px;
  letter-spacing: 3px;
  color: #336699;
`;

const InfoBox = styled.p`
  margin: 0;
  padding: 3px 5px 1px;
  border: 1px solid #b1c6d8;
  border-width: 1px 0;
  background: #f5f5f5;
  text-align: ${({ $justify }) => ($justify ? "justify" : "left")};
`;

const Table = styled.table`
  width: 100%;
  margin-top: 22px;
  table-layout: fixed;
  border-spacing: 0;
  line-height: 13px;
`;

const Col = styled.col`
  width: ${({ $width }) => ($width ? `${$width}px` : "auto")};
`;

const Th = styled.th`
  height: 28px;
  padding: 0;
  border-bottom: 1px solid ${({ $blank }) => ($blank ? "#f5f5f5" : "#ccc")};
  background: #f5f5f5;
  text-align: ${({ $align = "center" }) => $align};
`;

const Td = styled.td`
  height: 22px;
  padding: 0;
  text-align: ${({ $align = "center" }) => $align};
`;

const Row = styled.tr`
  &:nth-child(even) {
    background: #e4f2e4;
  }
`;

const Radio = styled.input.attrs({ type: "radio" })`
  display: block;
  appearance: none;
  width: 13px;
  height: 13px;
  margin: 0 4px 1px;
  border: 1px solid #666;
  border-radius: 50%;
  background: #fff;

  &:checked {
    background: radial-gradient(#222 0 3px, #fff 4px);
  }
`;

const PayLinks = styled.div`
  display: flex;
  justify-content: space-between;
  padding: 0 6px;
`;

const LanguageRow = styled.div`
  display: grid;
  grid-template-columns: 205px auto;
  align-items: end;
  margin-top: 17px;
`;

const Note = styled.p`
  margin: 37px 0 11px;
`;

const SubmitButton = styled.button`
  display: block;
  height: 17px;
  padding: 0 8px;
  border: 1px solid #555;
  background: #e4e4e4;
  font-size: 10px;
  line-height: 15px;
`;

const Subtitle = styled.h2`
  margin: 22px 0 25px;
  padding-bottom: 1px;
  border-bottom: 1px solid #ccc;
  font-size: 12px;
  line-height: 17px;
  letter-spacing: 2px;
  color: #a8925f;
`;

const Legend = styled.div`
  display: flex;
  gap: 22px;
  padding: 21px 0 0 2px;
`;

const LegendItem = styled.div`
  display: flex;
  align-items: center;
  gap: 7px;
`;
